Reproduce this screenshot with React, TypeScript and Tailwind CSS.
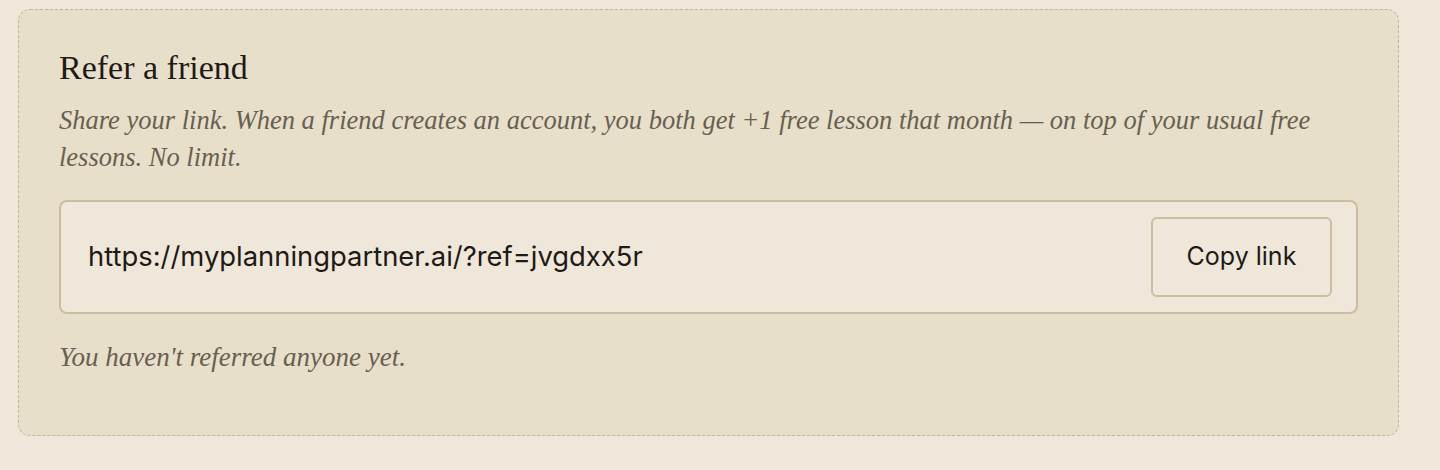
import React from 'react';

const ReferralCard: React.FC = () => {
  const link = 'https://myplanningpartner.ai/?ref=jvgdxx5r';

  return (
    <div className="rounded-xl border border-dashed border-[#c4b494] bg-[#e8dfcb] px-10 pt-[36px] pb-[60px]">
      <h2 className="font-['Liberation_Serif',serif] text-[34px] leading-[44px] text-[#1e1a15]">
        Refer a friend
      </h2>
      <p className="mt-[12px] font-['Liberation_Serif',serif] text-[26.5px] leading-[37px] italic text-[#676050]">
        Share your link. When a friend creates an account, you both get +1 free lesson that month — on top of your usual free
        lessons. No limit.
      </p>

      <div className="mt-[24px] flex h-[114px] items-center justify-between rounded-lg border-2 border-[#cbbd9e] bg-[#efe7da] pl-[27px] pr-6">
        <span className="font-['Inter',sans-serif] text-[27.4px] text-[#1e1a15]">{link}</span>
        <button className="h-[80px] w-[181px] rounded-md border-2 border-[#cbbd9e] font-['Inter',sans-serif] text-[25px] text-[#1e1a15]">
          Copy link
        </button>
      </div>

      <p className="mt-[25px] font-['Liberation_Serif',serif] text-[27px] leading-[36px] italic text-[#676050]">
        You haven't referred anyone yet.
      </p>
    </div>
  );
};

export default function App() {
  return (
    <div className="min-h-[470px] bg-[#efe8da] pt-[9px] pr-[41px] pl-[18px]">
      <ReferralCard />
    </div>
  );
}
